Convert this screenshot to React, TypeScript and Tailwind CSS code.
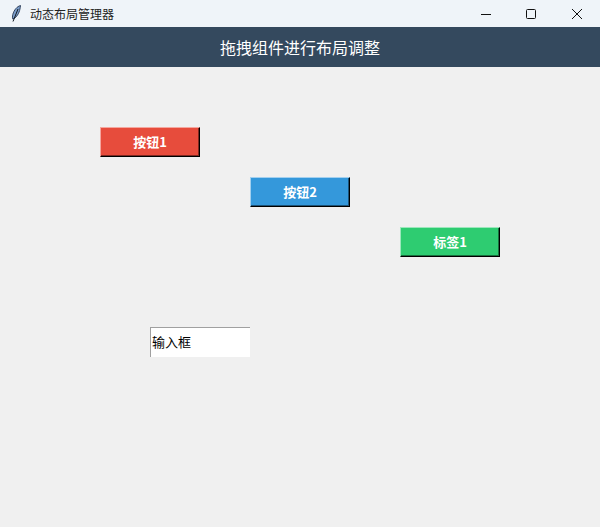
const cjk = { fontFamily: '"Noto Sans CJK SC", "Liberation Sans", sans-serif' };

function Widget({ label, left, top, face, light }: { label: string; left: number; top: number; face: string; light: string }) {
  return (
    <div
      className="absolute flex h-[30px] w-[100px] items-center justify-center border-b border-r border-b-black border-r-black pb-[1px] text-[13px] font-bold text-white shadow-[inset_-1px_-1px_0_rgba(0,0,0,0.45)]"
      style={{ left, top, backgroundColor: face, borderTop: `1px solid ${light}`, borderLeft: `1px solid ${light}`, ...cjk }}
    >
      {label}
    </div>
  );
}

export default function App() {
  return (
    <div className="flex h-[527px] w-[600px] flex-col overflow-hidden bg-[#f0f0f0]" style={cjk}>
      <div className="flex h-[27px] shrink-0 items-center bg-[#eff4f9]">
        <svg width="14" height="20" viewBox="0 0 14 20" className="ml-[9px] shrink-0">
          <path d="M11.5 1.5C8 2.5 5 6 3.8 10.5c-.5 2-.4 3.5 0 4.5 3-1 5.8-4.5 6.8-8.5.5-2 .8-3.8.9-5z" fill="#7a9cc9" stroke="#33445f" strokeWidth="1" />
          <path d="M9 5L4 17.5" stroke="#101820" strokeWidth="1" fill="none" />
        </svg>
        <span className="ml-[7px] text-[12px] leading-none text-[#222]">动态布局管理器</span>
        <div className="ml-auto flex items-center">
          <svg width="12" height="12" viewBox="0 0 12 12" className="mr-[33px]">
            <path d="M1 6.5H11" stroke="#111" strokeWidth="1" />
          </svg>
          <svg width="12" height="12" viewBox="0 0 12 12" className="mr-[34px]">
            <rect x="1.5" y="1.5" width="9" height="9" rx="1" fill="none" stroke="#111" strokeWidth="1" />
          </svg>
          <svg width="12" height="12" viewBox="0 0 12 12" className="mr-[17px]">
            <path d="M1 1L11 11M11 1L1 11" stroke="#111" strokeWidth="1" />
          </svg>
        </div>
      </div>
      <div className="flex h-10 shrink-0 items-center justify-center bg-[#34495e] text-[16px] text-white">
        拖拽组件进行布局调整
      </div>
      <div className="relative flex-1 -mt-[67px]">
        <Widget label="按钮1" left={100} top={127} face="#e74c3c" light="#f5a79f" />
        <Widget label="按钮2" left={250} top={177} face="#3498db" light="#a3d0ef" />
        <Widget label="标签1" left={400} top={227} face="#2ecc71" light="#9ce8bc" />
        <div className="absolute left-[150px] top-[327px] flex h-[30px] w-[100px] items-center border-l border-t border-l-[#a0a0a0] border-t-[#a0a0a0] bg-white pb-[2px] pl-[1px] text-[13px] text-black">
          输入框
        </div>
      </div>
    </div>
  );
}
